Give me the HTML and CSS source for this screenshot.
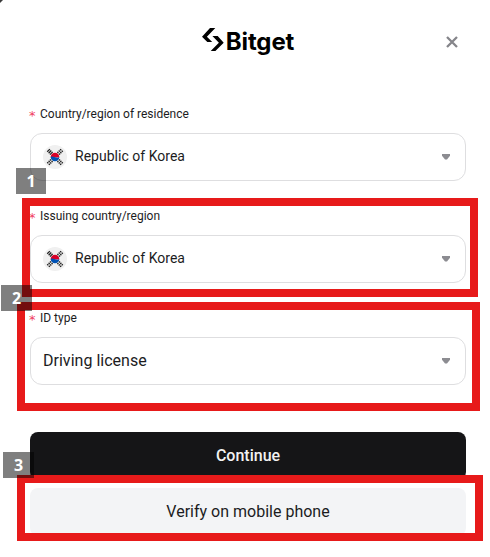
FILE: index.html
```html
<!DOCTYPE html>
<html lang="en">
<head>
<meta charset="utf-8">
<title>Bitget</title>
<link rel="stylesheet" href="styles.css">
</head>
<body>
<svg width="0" height="0" class="defs">
  <symbol id="korea" viewBox="0 0 24 24">
    <circle cx="12" cy="12" r="12" fill="#f0f0f0"/>
    <g stroke="#222" stroke-width="1.300" fill="none">
      <path d="M4.200 6.800 6.900 4.100M5.600 8.200 8.300 5.500M7 9.600 9.700 6.900"/>
      <path d="M17.100 4.100 19.800 6.800M15.700 5.500 18.400 8.200M14.300 6.900 17 9.600" stroke-dasharray="1.600 .6"/>
      <path d="M4.200 17.200 6.900 19.900M5.600 15.800 8.300 18.500M7 14.400 9.700 17.100" stroke-dasharray="1.600 .6"/>
      <path d="M17.100 19.900 19.800 17.200M15.700 18.500 18.400 15.800M14.300 17.100 17 14.400" stroke-dasharray="1.600 .6"/>
    </g>
    <path d="M7.700 12a4.300 4.300 0 0 1 8.600 0v.6H7.700z" fill="#d80027"/>
    <path d="M7.700 12c1.200-.8 3-.2 4.300.2s3 1 4.300-.2a4.300 4.300 0 0 1-8.600 0z" fill="#0052b4"/>
  </symbol>
  <symbol id="caret" viewBox="0 0 8 6"><path d="M0 0h8v1.700L5 5.500H3L0 1.700z" fill="#8c8c91"/></symbol>
</svg>
<main class="dialog">
  <header class="header">
    <div class="brand">
      <svg class="mark" viewBox="0 0 22 23"><path d="M8 0h5.300L4.900 8.700 10.200 14H5.300L0 8.700zM10.400 8h5.300l6 6.700-8.300 8.300H8.700l8.200-8.300z"/></svg>
      <span class="wordmark">Bitget</span>
    </div>
    <svg class="close" viewBox="0 0 12 12"><path d="M1 1l10 10M11 1L1 11" stroke="#85858a" stroke-width="2.300"/></svg>
  </header>
  <section class="field">
    <div class="label"><span class="required">*</span><span>Country/region of residence</span></div>
    <div class="select"><svg class="flag"><use href="#korea"/></svg><span class="value">Republic of Korea</span><svg class="caret"><use href="#caret"/></svg></div>
  </section>
  <section class="field">
    <div class="label"><span class="required">*</span><span>Issuing country/region</span></div>
    <div class="select"><svg class="flag"><use href="#korea"/></svg><span class="value">Republic of Korea</span><svg class="caret"><use href="#caret"/></svg></div>
  </section>
  <section class="field">
    <div class="label"><span class="required">*</span><span>ID type</span></div>
    <div class="select"><span class="value large">Driving license</span><svg class="caret"><use href="#caret"/></svg></div>
  </section>
  <div class="actions">
    <div class="button primary"><span>Continue</span></div>
    <div class="button secondary"><span>Verify on mobile phone</span></div>
  </div>
</main>
<div class="corner"></div>
<div class="outline outline-country"></div>
<div class="outline outline-type"></div>
<div class="outline outline-verify"></div>
<div class="step step-one">1</div>
<div class="step step-two">2</div>
<div class="step step-three">3</div>
</body>
</html>
```

FILE: styles.css
```css
* { box-sizing: border-box; }
body {
  margin: 0;
  height: 557px;
  position: relative;
  overflow: hidden;
  background: #fff;
  color: #1c1c1e;
  font-family: Roboto, "Liberation Sans", sans-serif;
}
.defs { position: absolute; }
.dialog { padding: 0 24px 0 30px; }
.header {
  display: grid;
  grid-template-columns: 1fr auto 1fr;
  align-items: center;
  width: 436px;
  height: 106px;
  padding-bottom: 22px;
}
.brand { grid-column: 2; display: flex; align-items: center; gap: 2px; color: #000; }
.mark { width: 22px; height: 23px; margin-top: -5px; }
.wordmark { font: 700 24px/30px Inter, sans-serif; letter-spacing: -.1px; }
.close { width: 12px; height: 12px; justify-self: end; margin-right: 8px; }
.field { width: 436px; height: 102px; }
.label { display: flex; height: 27px; font-size: 12px; line-height: 16px; }
.required { width: 10px; color: #f0405f; font: 13px/20px "DejaVu Sans", sans-serif; text-indent: -1px; }
.select {
  display: flex;
  align-items: center;
  height: 48px;
  padding: 0 15px 0 12px;
  border: 1px solid #dedee0;
  border-radius: 12px;
}
.flag { width: 24px; height: 24px; margin-right: 8px; }
.value { font-size: 14px; line-height: 20px; padding-bottom: 2px; letter-spacing: .02px; }
.large { font-size: 16px; padding-bottom: 0; }
.caret { width: 8px; height: 6px; margin-left: auto; }
.actions { width: 436px; padding-top: 20px; display: grid; gap: 8px; }
.button {
  display: flex;
  align-items: center;
  justify-content: center;
  height: 48px;
  padding-bottom: 2px;
  border-radius: 8px;
  font-size: 16px;
}
.primary { background: #151517; color: #f2f2f2; font-weight: 500; }
.secondary { background: #f3f4f6; }
.corner {
  position: absolute;
  top: 0;
  left: 0;
  width: 3px;
  height: 3px;
  background: #3a3a3a;
  clip-path: polygon(0 0, 100% 0, 0 100%);
}
.outline { position: absolute; border: 8px solid #e71a1a; }
.outline-country { left: 22px; top: 198px; width: 456px; height: 99px; }
.outline-type { left: 17px; top: 302px; width: 463px; height: 109px; }
.outline-verify { left: 17px; top: 475px; width: 466px; height: 66px; box-shadow: 0 8px 0 #fff; }
.step {
  position: absolute;
  width: 30px;
  height: 26px;
  background: rgba(0, 0, 0, .5);
  color: #fff;
  font: 700 16px/27px "Noto Sans", sans-serif;
  text-align: center;
}
.step-one { left: 16px; top: 168px; }
.step-two { left: 1px; top: 285px; width: 31px; }
.step-three { left: 3px; top: 452px; width: 31px; }
```
